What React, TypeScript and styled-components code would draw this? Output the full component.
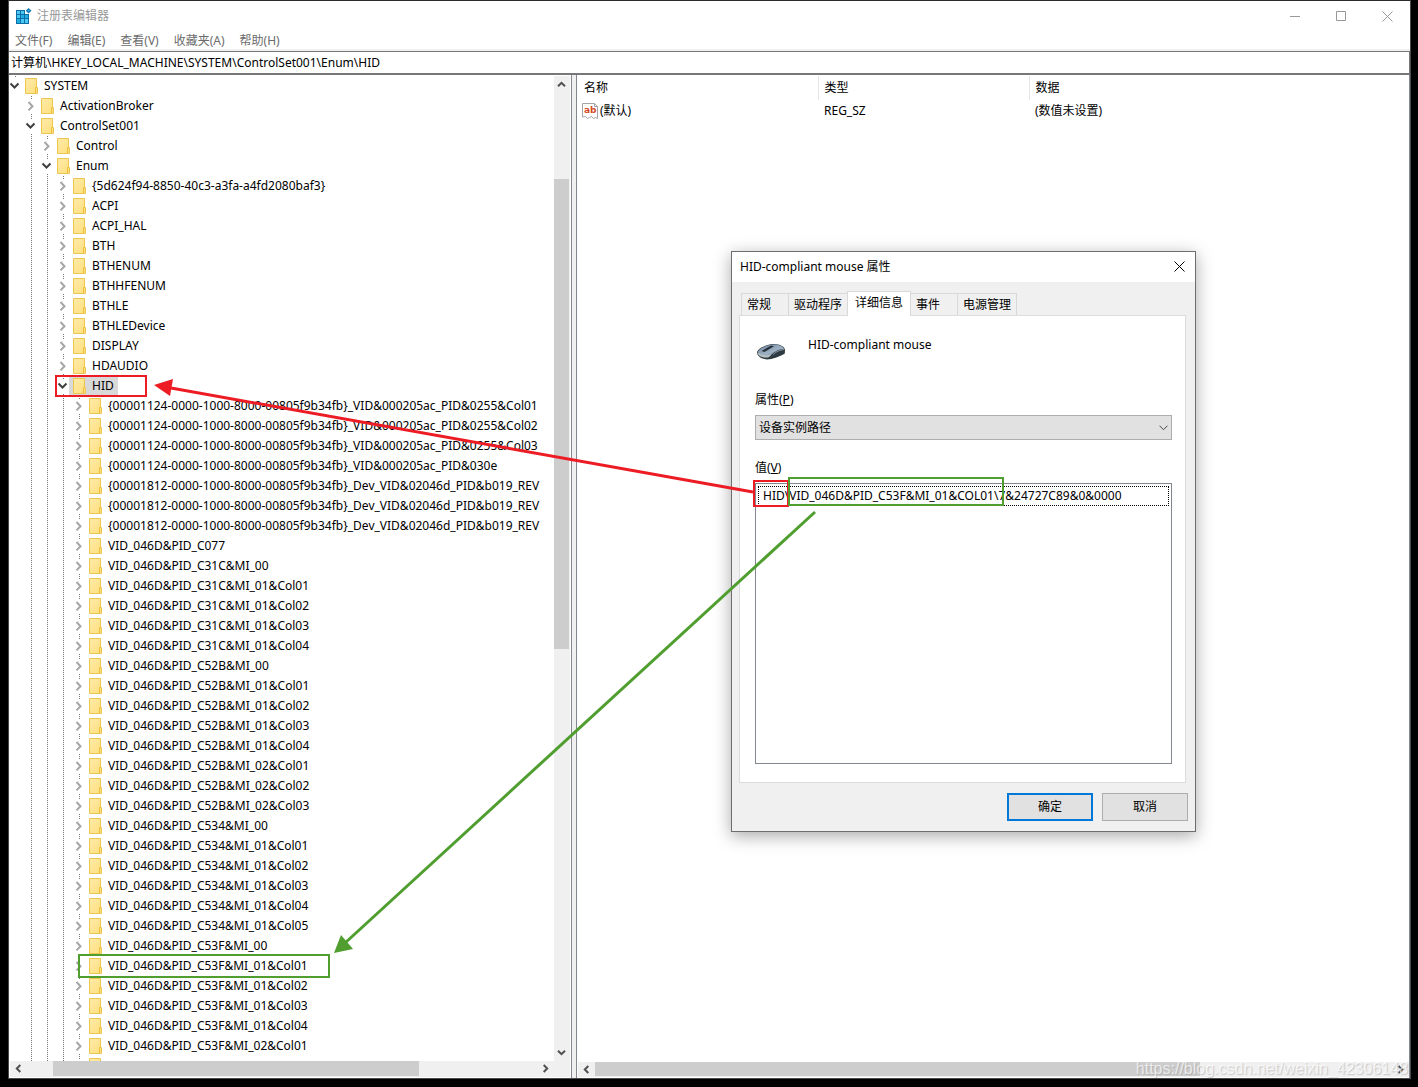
import React, { useState } from "react";
import styled, { createGlobalStyle, css } from "styled-components";

const color = {
  frame: "#4a4a4c",
  edge: "#828790",
  face: "#f0f0f0",
  thumb: "#cdcdcd",
  arrow: "#505050",
  muted: "#6b6b6b",
  red: "#ed1c24",
  green: "#4f9e2f",
};

const Global = createGlobalStyle`
  *, *::before, *::after { box-sizing: border-box; }
  html, body { margin: 0; background: #000; }
  body, button, input, select {
    font-family: "Noto Sans", "Noto Sans CJK SC", sans-serif;
    font-size: 12px;
    line-height: 20px;
    color: #000;
  }
  button, input, select { margin: 0; padding: 0; border: 0; background: none; border-radius: 0; }
  ul { list-style: none; margin: 0; padding: 0; }
  svg { display: block; flex: none; }
`;

const Desktop = styled.div`
  position: relative;
  height: 100vh;
  padding: 0 7px 8px 8px;
  overflow: hidden;
`;

const Window = styled.main`
  height: 100%;
  display: flex;
  flex-direction: column;
  background: #fff;
  border: 1px solid ${color.frame};
  border-top-color: #2b2b2b;
`;

const TitleBar = styled.header`
  display: flex;
  align-items: center;
  height: 30px;
  padding-left: 7px;
  gap: 5px;
  flex: none;
`;

const Title = styled.h1`
  flex: 1;
  margin: 0;
  font-size: 12px;
  font-weight: 400;
  color: #999;
`;

const Captions = styled.div`
  display: flex;
`;

const CaptionButton = styled.button`
  display: grid;
  place-items: center;
  width: 46px;
  height: 28px;
  color: #999;
`;

const MenuBar = styled.nav`
  display: flex;
  flex: none;
  gap: 15px;
  height: 20px;
  padding-left: 6px;
  border-bottom: 2px solid ${color.face};
`;

const MenuItem = styled.button`
  color: ${color.muted};
  white-space: nowrap;
`;

const Address = styled.input`
  flex: none;
  width: 100%;
  height: 24px;
  padding: 0 2px 2px;
  border: 1px solid #777;
  border-width: 1px 1px 2px 0;
  outline: 0;
`;

const Panes = styled.div`
  flex: 1;
  min-height: 0;
  display: grid;
  grid-template-columns: minmax(0, 563fr) 4px minmax(0, 834fr);
`;

const Splitter = styled.div`
  background: ${color.face};
`;

const TreePane = styled.section`
  display: grid;
  grid-template: minmax(0, 1fr) 17px / minmax(0, 1fr) 17px;
  min-height: 0;
  padding-top: 1px;
  border-right: 1px solid ${color.edge};
`;

const TreeView = styled.ul`
  overflow: hidden;
  min-height: 0;
  margin-left: -2px;
`;

const Row = styled.li`
  display: flex;
  height: 20px;
  white-space: nowrap;
`;

const dots = css`
  background: repeating-linear-gradient(#777 0 1px, transparent 1px 2px) 8px 0 / 1px 100% no-repeat;
`;

const Guide = styled.span<{ $line: boolean }>`
  flex: none;
  width: 16px;
  ${(p) => p.$line && dots}
`;

const Toggle = styled.button<{ $root: boolean }>`
  flex: none;
  display: flex;
  align-items: center;
  width: 14px;
  height: 20px;
  padding-left: 2px;
  ${dots}
  ${(p) => p.$root && "background-size: 1px 2px;"}

  svg { background: #fff; }
`;

const NodeLabel = styled.span<{ $selected: boolean }>`
  display: flex;
  align-items: center;
  gap: 6px;
  padding: 0 4px;
  background: ${(p) => (p.$selected ? "#d9d9d9" : "transparent")};
`;

const Bar = styled.div<{ $vertical?: boolean }>`
  display: flex;
  flex-direction: ${(p) => (p.$vertical ? "column" : "row")};
  background: ${color.face};
  border: solid #fff;
  border-width: ${(p) => (p.$vertical ? "0 1px 0 0" : "0 0 1px 1px")};
`;

const BarButton = styled.button<{ $vertical: boolean }>`
  flex: none;
  display: grid;
  place-items: center;
  width: ${(p) => (p.$vertical ? 15 : 17)}px;
  height: ${(p) => (p.$vertical ? 17 : 15)}px;
`;

const Track = styled.div<{ $vertical?: boolean }>`
  flex: 1;
  display: flex;
  flex-direction: ${(p) => (p.$vertical ? "column" : "row")};
  padding: ${(p) => (p.$vertical ? "0 1px 0 0" : "0 0 1px")};
`;

const Thumb = styled.div<{ $size: number }>`
  flex: ${(p) => p.$size} 0 0;
  background: ${color.thumb};
`;

const Space = styled.div<{ $size: number }>`
  flex: ${(p) => p.$size} 0 0;
`;

const Corner = styled.div`
  background: ${color.face};
  border: solid #fff;
  border-width: 0 1px 1px 0;
`;

const ValuePane = styled.section`
  display: flex;
  flex-direction: column;
  min-height: 0;
  border: solid ${color.edge};
  border-width: 0 1px 0 1px;
`;

const ValueArea = styled.div`
  flex: 1;
  padding-top: 1px;
`;

const ValueTable = styled.table`
  width: 100%;
  table-layout: fixed;
  border-collapse: collapse;

  th, td {
    padding: 0 6px;
    text-align: left;
    font-weight: 400;
    white-space: nowrap;
  }
  th { height: 24px; border-right: 1px solid #e5e5e5; }
  th:first-child { width: 241px; padding-left: 7px; }
  th:nth-child(2) { width: 211px; }
  th:last-child { border-right: 0; }
  td { height: 22px; }
  td:first-child { padding-left: 5px; }
`;

const NameCell = styled.span`
  display: flex;
  align-items: center;
  gap: 2px;
`;

const Dialog = styled.section`
  position: absolute;
  left: 731px;
  top: 251px;
  width: 465px;
  display: flex;
  flex-direction: column;
  background: ${color.face};
  border: 1px solid #6e6e6e;
  box-shadow: 0 4px 16px rgba(0, 0, 0, 0.34);
`;

const DialogTitle = styled.header`
  display: flex;
  align-items: center;
  justify-content: space-between;
  height: 30px;
  padding-left: 8px;
  background: #fff;
`;

const DialogHeading = styled.h2`
  margin: 0;
  font-size: 12px;
  font-weight: 400;
`;

const CloseButton = styled.button`
  display: grid;
  place-items: center;
  width: 31px;
  height: 30px;
  padding-bottom: 2px;
`;

const Tabs = styled.div`
  display: flex;
  align-items: flex-end;
  height: 33px;
  padding-left: 9px;
`;

const Tab = styled.button<{ $active: boolean; $wide: boolean }>`
  width: ${(p) => (p.$wide ? 59 : 47)}px;
  height: 22px;
  padding-left: 5px;
  text-align: left;
  white-space: nowrap;
  border: 1px solid #d9d9d9;
  border-width: 1px 1px 0 0;

  &:first-child { width: 48px; border-left-width: 1px; }

  ${(p) =>
    p.$active &&
    css`
      z-index: 1;
      width: 64px;
      height: 25px;
      margin: 0 0 -1px -1px;
      padding: 0 0 3px 7px;
      background: #fff;
      border-left-width: 1px;
    `}
`;

const TabPanel = styled.div`
  display: flex;
  flex-direction: column;
  height: 468px;
  margin: 0 9px 0 7px;
  padding: 19px 13px 18px 15px;
  background: #fff;
  border: 1px solid #dcdcdc;
`;

const Device = styled.div`
  display: flex;
  gap: 20px;
  height: 54px;
  padding-left: 1px;

  svg { margin-top: 2px; }
`;

const FieldLabel = styled.label`
  height: 26px;
  line-height: 22px;
`;

const PropertySelect = styled.div`
  display: grid;
  align-items: center;
  margin-bottom: 17px;

  > * { grid-area: 1 / 1; }
  > svg { justify-self: end; margin-right: 4px; pointer-events: none; }
`;

const Select = styled.select`
  appearance: none;
  width: 100%;
  height: 25px;
  padding: 0 3px;
  background: #e1e1e1;
  border: 1px solid #adadad;
`;

const ListBox = styled.ul`
  flex: 1;
  padding: 2px;
  border: 1px solid ${color.edge};
`;

const ListItem = styled.li`
  height: 20px;
  padding-left: 4px;
  line-height: 18px;
  border: 1px dotted #000;
`;

const Actions = styled.footer`
  display: flex;
  justify-content: flex-end;
  gap: 9px;
  padding: 10px 7px;
`;

const ActionButton = styled.button<{ $primary?: boolean }>`
  width: 86px;
  height: 28px;
  background: #e1e1e1;
  border: ${(p) => (p.$primary ? "2px solid #0078d7" : "1px solid #adadad")};
`;

const Markup = styled.svg`
  position: absolute;
  left: 0;
  top: 0;
  pointer-events: none;
`;

const Watermark = styled.span`
  position: absolute;
  right: 10px;
  bottom: 8px;
  font-family: "Liberation Sans", sans-serif;
  font-size: 16px;
  color: rgba(255, 255, 255, 0.7);
  text-shadow: 1px 1px 1px rgba(120, 120, 120, 0.35);
  pointer-events: none;
`;

const RegeditIcon = () => (
  <svg width="16" height="16" viewBox="0 0 16 16" aria-hidden="true">
    <path d="M0 2h9v4h4v10H0z" fill="#0d6ea5" />
    <g fill="#4cc8f4">
      <path d="M1 3h3v3H1zM5 3h3v3H5zM1 7h3v3H1zM5 11h3v4H5zM9 11h3v4H9z" />
      <path d="M5 7h3v3H5zM9 7h3v3H9zM1 11h3v4H1z" fill="#21aee6" />
    </g>
    <path d="M12.5 0L15.5 2.8 12.5 5.6 9.7 2.8z" fill="#0f78b4" />
    <path d="M12.5 1.8l1.1 1-1.1 1-1-1z" fill="#3cb4e6" />
  </svg>
);

const Folder = () => (
  <svg width="13" height="16" viewBox="0 0 13 16" aria-hidden="true">
    <defs>
      <linearGradient id="folder" x1="0" y1="0" x2="1" y2="1">
        <stop offset="0" stopColor="#ffebaa" />
        <stop offset="1" stopColor="#ffdf7c" />
      </linearGradient>
    </defs>
    <path d="M.5 .5h11v9h1v6H.5z" fill="url(#folder)" stroke="#ebc651" />
    <path d="M10.5 15V9.5h1" fill="none" stroke="#e8bd3c" />
  </svg>
);

const Chevron = ({ open }: { open: boolean }) => (
  <svg width="12" height="14" viewBox="0 0 12 14" aria-hidden="true">
    {open ? (
      <path d="M1.500 4.500l4 4 4-4" fill="none" stroke="#404040" strokeWidth="2" />
    ) : (
      <path d="M3.500 3l4 4.200-4 4.200" fill="none" stroke="#a6a6a6" strokeWidth="2" />
    )}
  </svg>
);

const turns = { up: 0, right: 90, down: 180, left: 270 };

const BarArrow = ({ to }: { to: keyof typeof turns }) => (
  <BarButton $vertical={to === "up" || to === "down"} aria-label={`Scroll ${to}`}>
    <svg width="9" height="9" viewBox="0 0 9 9">
      <path
        d="M1 6.300l3.500-3.500L8 6.300"
        fill="none"
        stroke={color.arrow}
        strokeWidth="2"
        transform={`rotate(${turns[to]} 4.5 4.5)`}
      />
    </svg>
  </BarButton>
);

const StringIcon = () => (
  <svg width="16" height="16" viewBox="0 0 16 16" aria-hidden="true">
    <path d="M.5 .5h12l3 3v12l-2-1-2 1-2-2-2 1-2 1-2-2-3 .5z" fill="#fff" stroke="#a5a5a5" />
    <path d="M12.5 .5v3h3" fill="none" stroke="#a5a5a5" />
    <text x="2" y="10" fontSize="9" fontWeight="700" fontFamily="DejaVu Sans" fill="#d44a26">
      ab
    </text>
  </svg>
);

const MouseIcon = () => (
  <svg width="32" height="32" viewBox="0 0 32 32" aria-hidden="true">
    <defs>
      <linearGradient id="shell" x1="0" y1="0" x2="1" y2="1">
        <stop offset="0" stopColor="#6d8298" />
        <stop offset=".6" stopColor="#9fb2c6" />
        <stop offset="1" stopColor="#55687c" />
      </linearGradient>
    </defs>
    <path d="M1 15c1-3 9-8 17-8 6 0 11 3 11 6l-.2 3.500C25 19 16 22.500 11 22.500 5 22 1 19 1 15z" fill="#2f3b42" />
    <path d="M1.500 15.500C2 20 9 21 12 20.500 16 19 15 16 20 13l-9 3z" fill="#b9c2c4" />
    <path d="M2 14.500C4 11 11 7.500 18 7.500c5 0 9 2 10 4.500-6 0-9 3-13 5.500-5 2-12 1-13-3z" fill="url(#shell)" />
    <path d="M5.500 14L15 8.500l3 .7L8.500 15z" fill="#27323c" />
    <path d="M17 17.500c3-3 7-4.500 11-5" fill="none" stroke="#8797a4" />
  </svg>
);

const Cross = ({ size }: { size: number }) => (
  <svg width={size} height={size} viewBox="0 0 11 11">
    <path d="M.5 .5l10 10M10.500 .5l-10 10" stroke="currentColor" fill="none" />
  </svg>
);

type Node = { name: string; level: number; open?: boolean; selected?: boolean };

const at = (level: number, names: string[]): Node[] => names.map((name) => ({ name, level }));

const nodes: Node[] = [
  { name: "SYSTEM", level: 0, open: true },
  { name: "ActivationBroker", level: 1 },
  { name: "ControlSet001", level: 1, open: true },
  { name: "Control", level: 2 },
  { name: "Enum", level: 2, open: true },
  ...at(3, [
    "{5d624f94-8850-40c3-a3fa-a4fd2080baf3}",
    "ACPI",
    "ACPI_HAL",
    "BTH",
    "BTHENUM",
    "BTHHFENUM",
    "BTHLE",
    "BTHLEDevice",
    "DISPLAY",
    "HDAUDIO",
  ]),
  { name: "HID", level: 3, open: true, selected: true },
  ...at(4, [
    "{00001124-0000-1000-8000-00805f9b34fb}_VID&000205ac_PID&0255&Col01",
    "{00001124-0000-1000-8000-00805f9b34fb}_VID&000205ac_PID&0255&Col02",
    "{00001124-0000-1000-8000-00805f9b34fb}_VID&000205ac_PID&0255&Col03",
    "{00001124-0000-1000-8000-00805f9b34fb}_VID&000205ac_PID&030e",
    "{00001812-0000-1000-8000-00805f9b34fb}_Dev_VID&02046d_PID&b019_REV",
    "{00001812-0000-1000-8000-00805f9b34fb}_Dev_VID&02046d_PID&b019_REV",
    "{00001812-0000-1000-8000-00805f9b34fb}_Dev_VID&02046d_PID&b019_REV",
    "VID_046D&PID_C077",
    "VID_046D&PID_C31C&MI_00",
    "VID_046D&PID_C31C&MI_01&Col01",
    "VID_046D&PID_C31C&MI_01&Col02",
    "VID_046D&PID_C31C&MI_01&Col03",
    "VID_046D&PID_C31C&MI_01&Col04",
    "VID_046D&PID_C52B&MI_00",
    "VID_046D&PID_C52B&MI_01&Col01",
    "VID_046D&PID_C52B&MI_01&Col02",
    "VID_046D&PID_C52B&MI_01&Col03",
    "VID_046D&PID_C52B&MI_01&Col04",
    "VID_046D&PID_C52B&MI_02&Col01",
    "VID_046D&PID_C52B&MI_02&Col02",
    "VID_046D&PID_C52B&MI_02&Col03",
    "VID_046D&PID_C534&MI_00",
    "VID_046D&PID_C534&MI_01&Col01",
    "VID_046D&PID_C534&MI_01&Col02",
    "VID_046D&PID_C534&MI_01&Col03",
    "VID_046D&PID_C534&MI_01&Col04",
    "VID_046D&PID_C534&MI_01&Col05",
    "VID_046D&PID_C53F&MI_00",
    "VID_046D&PID_C53F&MI_01&Col01",
    "VID_046D&PID_C53F&MI_01&Col02",
    "VID_046D&PID_C53F&MI_01&Col03",
    "VID_046D&PID_C53F&MI_01&Col04",
    "VID_046D&PID_C53F&MI_02&Col01",
    "",
  ]),
];

const TreeRow = ({ node }: { node: Node }) => (
  <Row>
    {Array.from({ length: node.level }, (_, i) => (
      <Guide key={i} $line={i > 0} />
    ))}
    <Toggle $root={node.level === 0} aria-label={node.open ? "Collapse" : "Expand"}>
      <Chevron open={!!node.open} />
    </Toggle>
    <NodeLabel $selected={!!node.selected}>
      <Folder />
      {node.name}
    </NodeLabel>
  </Row>
);

const ScrollBar = ({ vertical, parts }: { vertical?: boolean; parts: [number, number, number] }) => (
  <Bar $vertical={vertical}>
    <BarArrow to={vertical ? "up" : "left"} />
    <Track $vertical={vertical}>
      <Space $size={parts[0]} />
      <Thumb $size={parts[1]} />
      <Space $size={parts[2]} />
    </Track>
    <BarArrow to={vertical ? "down" : "right"} />
  </Bar>
);

const menus = ["文件(F)", "编辑(E)", "查看(V)", "收藏夹(A)", "帮助(H)"];
const tabs = ["常规", "驱动程序", "详细信息", "事件", "电源管理"];

const PropertiesDialog = () => (
  <Dialog role="dialog" aria-labelledby="dialog-title">
    <DialogTitle>
      <DialogHeading id="dialog-title">HID-compliant mouse 属性</DialogHeading>
      <CloseButton aria-label="关闭">
        <Cross size={11} />
      </CloseButton>
    </DialogTitle>
    <Tabs role="tablist">
      {tabs.map((t) => (
        <Tab key={t} role="tab" aria-selected={t === "详细信息"} $active={t === "详细信息"} $wide={t.length > 2}>
          {t}
        </Tab>
      ))}
    </Tabs>
    <TabPanel role="tabpanel">
      <Device>
        <MouseIcon />
        HID-compliant mouse
      </Device>
      <FieldLabel htmlFor="property">
        属性(<u>P</u>)
      </FieldLabel>
      <PropertySelect>
        <Select id="property">
          <option>设备实例路径</option>
        </Select>
        <svg width="9" height="6" viewBox="0 0 9 6" aria-hidden="true">
          <path d="M.5 .7l4 4 4-4" fill="none" stroke="#444" />
        </svg>
      </PropertySelect>
      <FieldLabel as="span" id="value-label">
        值(<u>V</u>)
      </FieldLabel>
      <ListBox role="listbox" aria-labelledby="value-label">
        <ListItem role="option">HID\VID_046D&amp;PID_C53F&amp;MI_01&amp;COL01\7&amp;24727C89&amp;0&amp;0000</ListItem>
      </ListBox>
    </TabPanel>
    <Actions>
      <ActionButton $primary>确定</ActionButton>
      <ActionButton>取消</ActionButton>
    </Actions>
  </Dialog>
);

const Annotations = () => (
  <Markup width="1418" height="1087" viewBox="0 0 1418 1087" aria-hidden="true">
    <g fill="none" stroke={color.red} strokeWidth="2">
      <rect x="56" y="376" width="90" height="20" />
      <rect x="754" y="481" width="34" height="25" />
      <path d="M753 492L171 388" strokeWidth="3" />
    </g>
    <path d="M154 385l19-6-3 17z" fill={color.red} />
    <g fill="none" stroke={color.green} strokeWidth="2">
      <rect x="789" y="478" width="214" height="27" />
      <rect x="79" y="955" width="250" height="22" />
      <path d="M815 512L345 943" strokeWidth="3" />
    </g>
    <path d="M334 953l7-18 12 14z" fill={color.green} />
  </Markup>
);

export default function App() {
  const [path, setPath] = useState("计算机\\HKEY_LOCAL_MACHINE\\SYSTEM\\ControlSet001\\Enum\\HID");

  return (
    <Desktop>
      <Global />
      <Window>
        <TitleBar>
          <RegeditIcon />
          <Title>注册表编辑器</Title>
          <Captions>
            <CaptionButton aria-label="最小化">
              <svg width="10" height="11" viewBox="0 0 10 11">
                <path d="M0 5.500h10" stroke="currentColor" />
              </svg>
            </CaptionButton>
            <CaptionButton aria-label="最大化">
              <svg width="10" height="10" viewBox="0 0 10 10">
                <path d="M.5 .5h9v9h-9z" fill="none" stroke="currentColor" />
              </svg>
            </CaptionButton>
            <CaptionButton aria-label="关闭">
              <Cross size={11} />
            </CaptionButton>
          </Captions>
        </TitleBar>
        <MenuBar>
          {menus.map((m) => (
            <MenuItem key={m}>{m}</MenuItem>
          ))}
        </MenuBar>
        <Address aria-label="地址" value={path} onChange={(e) => setPath(e.target.value)} />
        <Panes>
          <TreePane>
            <TreeView>
              {nodes.map((n, i) => (
                <TreeRow key={i} node={n} />
              ))}
            </TreeView>
            <ScrollBar vertical parts={[86, 470, 395]} />
            <ScrollBar parts={[26, 366, 118]} />
            <Corner />
          </TreePane>
          <Splitter />
          <ValuePane>
            <ValueArea>
              <ValueTable>
                <thead>
                  <tr>
                    <th>名称</th>
                    <th>类型</th>
                    <th>数据</th>
                  </tr>
                </thead>
                <tbody>
                  <tr>
                    <td>
                      <NameCell>
                        <StringIcon />
                        (默认)
                      </NameCell>
                    </td>
                    <td>REG_SZ</td>
                    <td>(数值未设置)</td>
                  </tr>
                </tbody>
              </ValueTable>
            </ValueArea>
            <ScrollBar parts={[0, 605, 192]} />
          </ValuePane>
        </Panes>
      </Window>
      <PropertiesDialog />
      <Annotations />
      <Watermark>https://blog.csdn.net/weixin_42306148</Watermark>
    </Desktop>
  );
}
